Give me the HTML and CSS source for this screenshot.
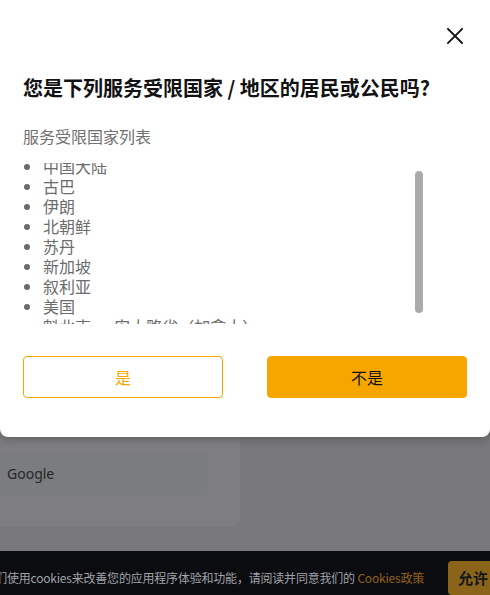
FILE: index.html
```html
<!DOCTYPE html>
<html lang="zh-CN">
<head>
<meta charset="utf-8">
<title>服务受限国家</title>
<link rel="stylesheet" href="styles.css">
</head>
<body>
  <div class="modal">
    <div class="modal-head">
      <svg class="close" width="24" height="24" viewBox="0 0 24 24" aria-label="关闭">
        <path d="M5 5 L19 19 M19 5 L5 19" stroke="#121214" stroke-width="1.8" stroke-linecap="square" fill="none"/>
      </svg>
    </div>
    <h1 class="title">您是下列服务受限国家 / 地区的居民或公民吗?</h1>
    <p class="subtitle">服务受限国家列表</p>
    <div class="list-row">
      <div class="list-clip">
        <ul class="country-list">
          <li>中国大陆</li>
          <li>古巴</li>
          <li>伊朗</li>
          <li>北朝鲜</li>
          <li>苏丹</li>
          <li>新加坡</li>
          <li>叙利亚</li>
          <li>美国</li>
          <li class="nobullet">魁北克 — 安大略省（加拿大）</li>
          <li>克里米亚地区</li>
        </ul>
      </div>
      <div class="scroll-track"><div class="scroll-thumb"></div></div>
    </div>
    <div class="actions">
      <button class="btn btn-outline">是</button>
      <button class="btn btn-solid">不是</button>
    </div>
  </div>

  <div class="bg-card">
    <div class="bg-field">Google</div>
  </div>

  <div class="cookie-bar">
    <div class="cookie-inner">
      <span class="cookie-text">我们使用cookies来改善您的应用程序体验和功能，请阅读并同意我们的 <span class="cookie-link">Cookies政策</span></span>
      <span class="cookie-btn">允许</span>
    </div>
  </div>
</body>
</html>
```

FILE: styles.css
```css
html, body {
  margin: 0;
  padding: 0;
}
body {
  width: 490px;
  height: 595px;
  overflow: hidden;
  background: #79797b;
  font-family: "Noto Sans CJK SC", "Noto Sans", sans-serif;
}

.modal {
  position: relative;
  z-index: 2;
  background: #ffffff;
  height: 437px;
  box-sizing: border-box;
  padding: 24px 23px 0 23px;
  border-radius: 0 0 8px 8px;
  box-shadow: 0 3px 10px rgba(0, 0, 0, 0.22);
}

.modal-head {
  display: flex;
  justify-content: flex-end;
  height: 24px;
}
.close {
  display: block;
}

.title {
  margin: 26px 0 0 0;
  font-size: 20px;
  line-height: 28px;
  font-weight: 700;
  color: #121214;
  letter-spacing: 0;
}

.subtitle {
  margin: 22px 0 0 0;
  font-size: 16px;
  line-height: 24px;
  color: #707070;
}

.list-row {
  display: flex;
  margin-top: 15px;
  height: 161px;
}
.list-clip {
  flex: 1;
  overflow: hidden;
}
.country-list {
  margin: -7px 0 0 0;
  padding: 0 0 0 20px;
  list-style: disc;
  color: #6c6c6c;
  font-size: 16px;
  line-height: 20px;
}
.country-list .nobullet {
  list-style: none;
}
.scroll-track {
  width: 8px;
  margin-right: 44px;
}
.scroll-thumb {
  margin-top: 8px;
  height: 142px;
  background: #ababab;
  border-radius: 4px;
}

.actions {
  display: flex;
  justify-content: space-between;
  margin-top: 32px;
}
.btn {
  width: 200px;
  height: 42px;
  border-radius: 4px;
  font-family: "Noto Sans CJK SC", "Noto Sans", sans-serif;
  font-size: 16px;
  padding: 0;
  box-sizing: border-box;
}
.btn-outline {
  background: #ffffff;
  border: 1px solid #f7a600;
  color: #f7a600;
}
.btn-solid {
  background: #f7a600;
  border: 1px solid #f7a600;
  color: #121214;
}

.bg-card {
  margin-top: 1px;
  width: 240px;
  height: 89px;
  background: #7e7e80;
  border-radius: 0 0 10px 0;
  padding-top: 14px;
  box-sizing: border-box;
}
.bg-field {
  width: 208px;
  height: 43px;
  background: #7b7c7e;
  border-radius: 0 4px 4px 0;
  box-sizing: border-box;
  padding-left: 7px;
  display: flex;
  align-items: center;
  font-family: "Noto Sans", sans-serif;
  font-size: 14px;
  color: #25272b;
}

.cookie-bar {
  margin-top: 24px;
  height: 50px;
  background: #0b0c10;
  display: flex;
  align-items: center;
  justify-content: flex-end;
  overflow: hidden;
}
.cookie-inner {
  display: flex;
  align-items: center;
  flex-shrink: 0;
  margin-right: -8px;
  white-space: nowrap;
}
.cookie-text {
  font-size: 12px;
  line-height: 18px;
  color: #a0a3a9;
  margin-top: 3px;
  letter-spacing: -0.2px;
}
.cookie-link {
  color: #94601a;
}
.cookie-btn {
  margin-left: 24px;
  height: 34px;
  padding: 0 10px;
  display: flex;
  align-items: center;
  background: #8a6418;
  border-radius: 4px;
  font-size: 15px;
  font-weight: 700;
  color: #15161a;
  margin-top: 3px;
}
```
